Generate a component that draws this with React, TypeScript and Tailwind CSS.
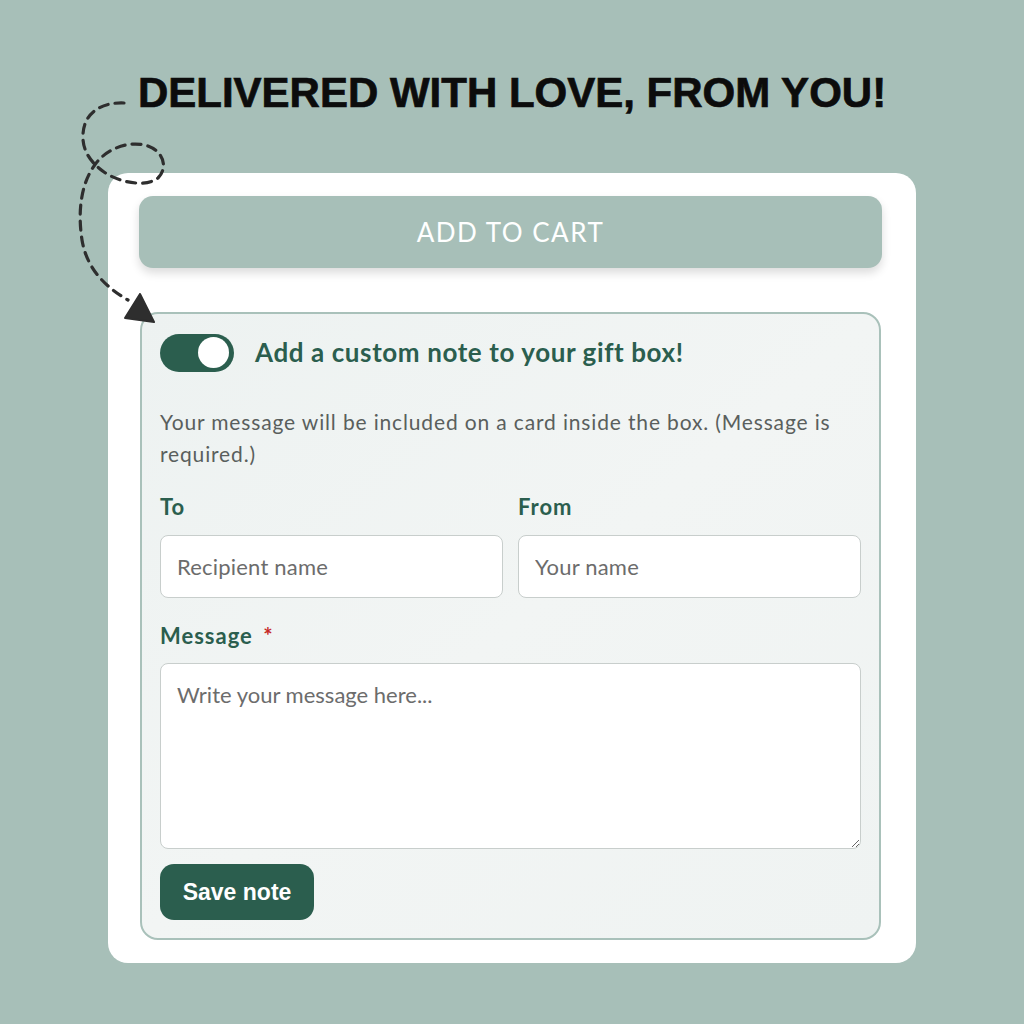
import React from "react";

const green = "text-[#2b5e4e]";

const DashedArrow: React.FC = () => (
  <svg
    className="absolute left-0 top-0 pointer-events-none"
    width="200"
    height="340"
    viewBox="0 0 200 340"
    fill="none"
  >
    <path
      d="M124,103 C100,102 84,114 83,134 C82,150 90,162 104,172 C118,182 145,188 158,178 C168,168 164,152 148,146 C130,140 106,148 94,166 C80,186 78,214 82,240 C86,264 100,284 128,300"
      stroke="#2e2e2e"
      strokeWidth="3.2"
      strokeDasharray="9 7"
      strokeLinecap="round"
    />
    <polygon points="140,294 125,318 154,322" fill="#2e2e2e" stroke="#2e2e2e" strokeWidth="2" strokeLinejoin="round" />
  </svg>
);

const App: React.FC = () => {
  return (
    <div className="relative w-[1024px] h-[1024px] bg-[#a7bfb8] overflow-hidden flex flex-col items-center font-['Lato',sans-serif]">
      <h1 className="mt-[72px] text-[42px] leading-none font-bold text-[#0c0c0c] font-['Liberation_Sans',Arial,sans-serif] [-webkit-text-stroke:0.7px_#0c0c0c]">
        DELIVERED WITH LOVE, FROM YOU!
      </h1>

      <div className="mt-[59px] w-[808px] bg-white rounded-[20px] pt-[23px] pb-[23px] pl-[31px] pr-[34px]">
        <button
          type="button"
          className="w-full h-[72px] rounded-[14px] bg-[#a7bfb8] text-white text-[26px] tracking-[1.5px] shadow-[0_5px_10px_rgba(0,0,0,0.14)]"
        >
          ADD TO CART
        </button>

        <div className="mt-[44px] border-2 border-[#a9c1ba] rounded-[18px] bg-gradient-to-br from-[#edf2f1] via-[#f2f5f4] to-[#eff3f2] px-[18px] pt-[19px] pb-[18px] ml-px mr-px">
          <div className="flex items-center gap-[21px]">
            <div className="w-[74px] h-[38px] rounded-full bg-[#2b5e4e] flex items-center justify-end pr-[5px]">
              <div className="w-[31px] h-[31px] rounded-full bg-white" />
            </div>
            <span className={`text-[26px] font-bold tracking-[0.6px] ${green}`}>Add a custom note to your gift box!</span>
          </div>

          <p className="mt-[34px] text-[21px] leading-[32px] text-[#5a5f5d] tracking-[0.85px]">
            Your message will be included on a card inside the box. (Message is required.)
          </p>

          <div className="mt-[25px] grid grid-cols-2 gap-[15px]">
            <div>
              <label className={`block text-[22px] leading-[24px] font-bold tracking-[1px] ${green}`}>To</label>
              <input
                type="text"
                placeholder="Recipient name"
                className="mt-[16px] w-full h-[63px] rounded-[8px] border border-[#c8cecc] bg-white px-[16px] text-[22px] tracking-[0.2px] placeholder:text-[#6c6c6c] outline-none"
              />
            </div>
            <div>
              <label className={`block text-[22px] leading-[24px] font-bold tracking-[1px] ${green}`}>From</label>
              <input
                type="text"
                placeholder="Your name"
                className="mt-[16px] w-full h-[63px] rounded-[8px] border border-[#c8cecc] bg-white px-[16px] text-[22px] tracking-[0.2px] placeholder:text-[#6c6c6c] outline-none"
              />
            </div>
          </div>

          <label className={`mt-[26px] block text-[22px] leading-[24px] font-bold tracking-[1px] ${green}`}>
            Message <span className="text-[#c62828] ml-[4px]">*</span>
          </label>
          <textarea
            placeholder="Write your message here..."
            className="mt-[15px] block w-full h-[186px] rounded-[8px] border border-[#c8cecc] bg-white px-[16px] py-[18px] text-[22px] leading-[26px] placeholder:text-[#6c6c6c] outline-none"
          />

          <button
            type="button"
            className="mt-[15px] w-[154px] h-[56px] rounded-[14px] bg-[#2b5e4e] text-white text-[23px] font-bold font-['Liberation_Sans',Arial,sans-serif]"
          >
            Save note
          </button>
        </div>
      </div>

      <DashedArrow />
    </div>
  );
};

export default App;
